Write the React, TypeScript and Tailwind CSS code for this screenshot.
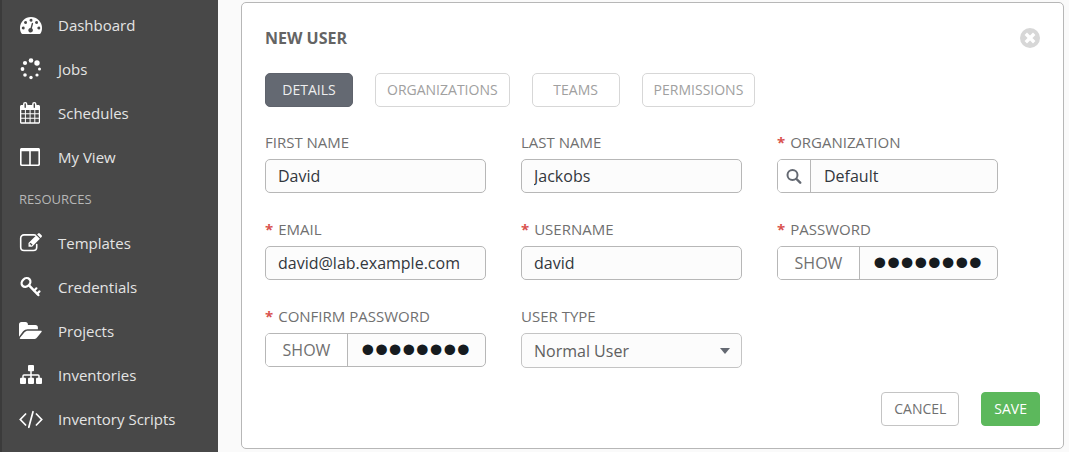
import React from 'react';

const icons: Record<string, React.ReactNode> = {
  dashboard: (
    <path
      fillRule="evenodd"
      d="M12 4a11 11 0 0 0-11 11c0 2 .5 3.900 1.500 5.500.2.300.5.500.9.500h17.200c.4 0 .7-.2.900-.5 1-1.600 1.500-3.500 1.500-5.500a11 11 0 0 0-11-11zM4.200 13.500a1.500 1.500 0 1 0 .01 3 1.500 1.500 0 0 0-.01-3zm2.300-5.500a1.500 1.500 0 1 0 .01 3 1.500 1.500 0 0 0-.01-3zM12 5.700a1.500 1.500 0 1 0 .01 3 1.500 1.500 0 0 0-.01-3zM17.500 8a1.500 1.500 0 1 0 .01 3 1.500 1.500 0 0 0-.01-3zm2.300 5.500a1.500 1.500 0 1 0 .01 3 1.500 1.500 0 0 0-.01-3zM13.600 9.900c-.4-.1-.8.1-.9.500l-1.200 4.500a2.300 2.300 0 1 0 1.400.4l1.200-4.500c.1-.4-.1-.8-.5-.9z"
    />
  ),
  jobs: (
    <>
      <circle cx="12" cy="3.500" r="2.300" />
      <circle cx="18" cy="6" r="2.700" />
      <circle cx="20.500" cy="12" r="1.500" />
      <circle cx="18" cy="18" r="1.600" />
      <circle cx="12" cy="20.500" r="1.700" />
      <circle cx="6" cy="18" r="1.800" />
      <circle cx="3.500" cy="12" r="1.900" />
      <circle cx="6" cy="6" r="2.100" />
    </>
  ),
  schedules: (
    <path
      fillRule="evenodd"
      d="M2.500 4H4V3.200a2.200 2.200 0 0 1 4.400 0V4h4.700V3.200a2.200 2.200 0 0 1 4.400 0V4h2c.8 0 1.500.7 1.500 1.500v15.700c0 .8-.7 1.500-1.500 1.500h-17c-.8 0-1.500-.7-1.500-1.500V5.500C1 4.700 1.700 4 2.500 4zM5.500 3v3.200a.7.7 0 0 0 1.400 0V3a.7.7 0 0 0-1.400 0zM14.600 3v3.200a.7.7 0 0 0 1.400 0V3a.7.7 0 0 0-1.400 0zM2.300 9v3.300h3.600V9zM6.900 9v3.300h3.700V9zM11.600 9v3.300h3.700V9zM16.300 9v3.300h3.500V9zM2.300 13.300v3.500h3.600v-3.500zM6.900 13.300v3.500h3.700v-3.500zM11.600 13.300v3.500h3.700v-3.500zM16.300 13.300v3.500h3.500v-3.500zM2.300 17.800v3.500h3.600v-3.500zM6.900 17.800v3.500h3.700v-3.500zM11.600 17.800v3.500h3.700v-3.500zM16.300 17.800v3.500h3.500v-3.500z"
    />
  ),
  view: (
    <path
      fillRule="evenodd"
      d="M2.700 3h16.600c1 0 1.700.7 1.700 1.700v14.600c0 1-.7 1.700-1.700 1.700H2.700c-1 0-1.700-.7-1.700-1.700V4.700C1 3.700 1.700 3 2.700 3zM2.600 6.200v12.700c0 .3.200.5.500.5h7.100V6.200zM11.800 6.200v13.200h7.100c.3 0 .5-.2.500-.5V6.200z"
    />
  ),
  templates: (
    <>
      <path
        d="M16.500 4.200c-.4-.2-.9-.3-1.400-.3H5a3.300 3.300 0 0 0-3.300 3.300v9A3.300 3.300 0 0 0 5 19.500h9.400a3.300 3.300 0 0 0 3.300-3.300v-2.600"
        fill="none"
        stroke="currentColor"
        strokeWidth="1.600"
        strokeLinecap="round"
      />
      <path
        fillRule="evenodd"
        d="M17.300 4.300l3.600 3.500-7.800 7.900H9.500v-3.600zM11.600 11.700l-.9.900v.8h1.200v1.200h.8l.9-.9z"
      />
      <path d="M18.100 3.500l1-1c.5-.5 1.200-.5 1.700 0l1.800 1.800c.5.500.5 1.200 0 1.700l-1 1z" />
    </>
  ),
  credentials: (
    <g fill="none" stroke="currentColor" strokeLinecap="round" strokeLinejoin="round">
      <ellipse cx="7" cy="7.500" rx="4.800" ry="3.900" transform="rotate(-45 7 7.500)" strokeWidth="2.300" />
      <path d="M10.300 10.600l9 9.400" strokeWidth="2.500" />
      <path d="M15.200 15.500l2.200-2.200M18.200 18.600l2.300-2.200" strokeWidth="2.200" />
    </g>
  ),
  projects: (
    <>
      <path d="M0 17.800V5.500A2.500 2.500 0 0 1 2.500 3h3.900a2.500 2.500 0 0 1 2.500 2.500V6h7.500a2.500 2.500 0 0 1 2.500 2.500v1.700H8.700c-1.600 0-3.500.9-4.600 2.100z" />
      <path d="M1.500 20c-.7 0-1-.5-.5-1.200l4.500-5.500c.7-.9 2.200-1.600 3.300-1.600h13c.9 0 1.200.6.700 1.300l-4.500 5.400c-.7.900-2.200 1.600-3.300 1.600z" />
    </>
  ),
  inventories: (
    <>
      <rect x="9" y="2" width="6" height="6.200" rx="1" />
      <rect x="1" y="14.800" width="6" height="6.200" rx="1" />
      <rect x="9" y="14.800" width="6" height="6.200" rx="1" />
      <rect x="17" y="14.800" width="6" height="6.200" rx="1" />
      <path
        d="M12 8v7M4 15v-2c0-.6.4-1 1-1h14c.6 0 1 .4 1 1v2"
        fill="none"
        stroke="currentColor"
        strokeWidth="1.500"
      />
    </>
  ),
  scripts: (
    <path
      d="M6.600 7L1.300 12.500 6.600 18M17.400 7l5.300 5.500-5.300 5.500M14 4.700L9.800 20.300"
      fill="none"
      stroke="currentColor"
      strokeWidth="1.700"
      strokeLinecap="round"
    />
  ),
};

const mainLinks = [
  { icon: 'dashboard', label: 'Dashboard' },
  { icon: 'jobs', label: 'Jobs' },
  { icon: 'schedules', label: 'Schedules' },
  { icon: 'view', label: 'My View' },
];

const resourceLinks = [
  { icon: 'templates', label: 'Templates' },
  { icon: 'credentials', label: 'Credentials' },
  { icon: 'projects', label: 'Projects' },
  { icon: 'inventories', label: 'Inventories' },
  { icon: 'scripts', label: 'Inventory Scripts' },
];

function NavLink({ icon, label }: { icon: string; label: string }) {
  return (
    <a href="#" className="flex h-11 items-center gap-[15px] pl-[17px] text-[15px] text-[#e4e4e4]">
      <svg viewBox="0 0 24 24" className="size-6 shrink-0 text-white" fill="currentColor" aria-hidden="true">
        {icons[icon]}
      </svg>
      {label}
    </a>
  );
}

function Field({ id, label, required, children }: {
  id: string;
  label: string;
  required?: boolean;
  children: React.ReactNode;
}) {
  return (
    <div className="min-w-0">
      <label htmlFor={id} className="mb-[7px] flex gap-[5px] text-[15px] leading-5 text-[#707070]">
        {required && <span className="font-bold text-[#d9534f]">*</span>}
        {label}
      </label>
      {children}
    </div>
  );
}

function TextInput({ id, value }: { id: string; value: string }) {
  return (
    <input
      id={id}
      type="text"
      defaultValue={value}
      className="h-[34px] w-full rounded-[5px] border border-[#b7b7b7] bg-[#fcfcfc] px-3 text-base text-[#33373c]"
    />
  );
}

function PasswordInput({ id }: { id: string }) {
  return (
    <div className="flex h-[34px] overflow-hidden rounded-[5px] border border-[#b7b7b7] bg-[#fcfcfc]">
      <button type="button" className="w-[82px] shrink-0 border-r border-[#b7b7b7] bg-white text-base text-[#707070]">
        SHOW
      </button>
      <input
        id={id}
        type="password"
        defaultValue="password"
        className="w-full min-w-0 pl-[13px] font-['Liberation_Sans',sans-serif] text-[39px] leading-8 text-[#161b1f]"
      />
    </div>
  );
}

function Tab({ label, active }: { label: string; active?: boolean }) {
  return (
    <button
      type="button"
      className={`h-[34px] min-w-[88px] rounded-[5px] border px-[11px] text-sm ${
        active ? 'border-[#5f636c] bg-[#646972] text-[#eeeeee]' : 'border-[#d7d7d7] bg-white text-[#a0a0a0]'
      }`}
    >
      {label}
    </button>
  );
}

export default function App() {
  return (
    <div className="flex min-h-screen bg-[#fafafa] font-['Open_Sans',sans-serif]">
      <nav className="w-[218px] shrink-0 border-l-2 border-[#3b3b3b] bg-[#484848] pt-[3px]">
        {mainLinks.map((link) => (
          <NavLink key={link.label} {...link} />
        ))}
        <h2 className="flex h-[42px] items-center pl-[17px] text-[13px] text-[#b7b7b7]">RESOURCES</h2>
        {resourceLinks.map((link) => (
          <NavLink key={link.label} {...link} />
        ))}
      </nav>

      <main className="min-w-0 flex-1 pt-[2px] pr-[5px] pb-[3px] pl-[23px]">
        <form className="rounded-[5px] border border-[#b7b7b7] bg-white px-[23px] pt-6 pb-[22px]">
          <div className="flex h-[22px] items-center justify-between">
            <h1 className="text-base font-bold text-[#646464]">NEW USER</h1>
            <button type="button" aria-label="Close">
              <svg viewBox="0 0 20 20" className="size-5" aria-hidden="true">
                <circle cx="10" cy="10" r="10" fill="#d7d7d7" />
                <path d="M7 7l6 6M13 7l-6 6" stroke="#fff" strokeWidth="3.400" strokeLinecap="square" />
              </svg>
            </button>
          </div>

          <div className="mt-6 flex gap-[22px]">
            <Tab label="DETAILS" active />
            <Tab label="ORGANIZATIONS" />
            <Tab label="TEAMS" />
            <Tab label="PERMISSIONS" />
          </div>

          <div className="mt-[25px] grid grid-cols-3 gap-x-[35px] gap-y-[26px] pr-[42px]">
            <Field id="first-name" label="FIRST NAME">
              <TextInput id="first-name" value="David" />
            </Field>
            <Field id="last-name" label="LAST NAME">
              <TextInput id="last-name" value="Jackobs" />
            </Field>
            <Field id="organization" label="ORGANIZATION" required>
              <div className="flex h-[34px] overflow-hidden rounded-[5px] border border-[#b7b7b7] bg-[#fcfcfc]">
                <button
                  type="button"
                  aria-label="Search"
                  className="flex w-[33px] shrink-0 items-center justify-center border-r border-[#b7b7b7] bg-white"
                >
                  <svg viewBox="0 0 16 16" className="size-4" fill="none" stroke="#646972" strokeLinecap="round" aria-hidden="true">
                    <circle cx="6.500" cy="7" r="5" strokeWidth="2" />
                    <path d="M10.500 11l3.700 3.700" strokeWidth="2.400" />
                  </svg>
                </button>
                <input
                  id="organization"
                  type="text"
                  defaultValue="Default"
                  className="w-full min-w-0 pl-[13px] text-base text-[#33373c]"
                />
              </div>
            </Field>
            <Field id="email" label="EMAIL" required>
              <TextInput id="email" value="david@lab.example.com" />
            </Field>
            <Field id="username" label="USERNAME" required>
              <TextInput id="username" value="david" />
            </Field>
            <Field id="password" label="PASSWORD" required>
              <PasswordInput id="password" />
            </Field>
            <Field id="confirm-password" label="CONFIRM PASSWORD" required>
              <PasswordInput id="confirm-password" />
            </Field>
            <Field id="user-type" label="USER TYPE">
              <div className="relative">
                <select
                  id="user-type"
                  className="h-[35px] w-full appearance-none rounded-[5px] border border-[#c4c4c4] bg-[#fcfcfc] px-3 text-base text-[#606060]"
                >
                  <option>Normal User</option>
                </select>
                <svg
                  viewBox="0 0 10 6"
                  className="pointer-events-none absolute top-[15px] right-3 h-[6px] w-[10px]"
                  fill="#646972"
                  aria-hidden="true"
                >
                  <path d="M0 0h10L5 6z" />
                </svg>
              </div>
            </Field>
          </div>

          <div className="mt-6 flex justify-end gap-[22px]">
            <button type="button" className="h-[34px] rounded border border-[#c4c4c4] bg-white px-3 text-sm text-[#707070]">
              CANCEL
            </button>
            <button type="submit" className="h-[34px] rounded border border-[#5cb85c] bg-[#5cb85c] px-3 text-sm text-white">
              SAVE
            </button>
          </div>
        </form>
      </main>
    </div>
  );
}
